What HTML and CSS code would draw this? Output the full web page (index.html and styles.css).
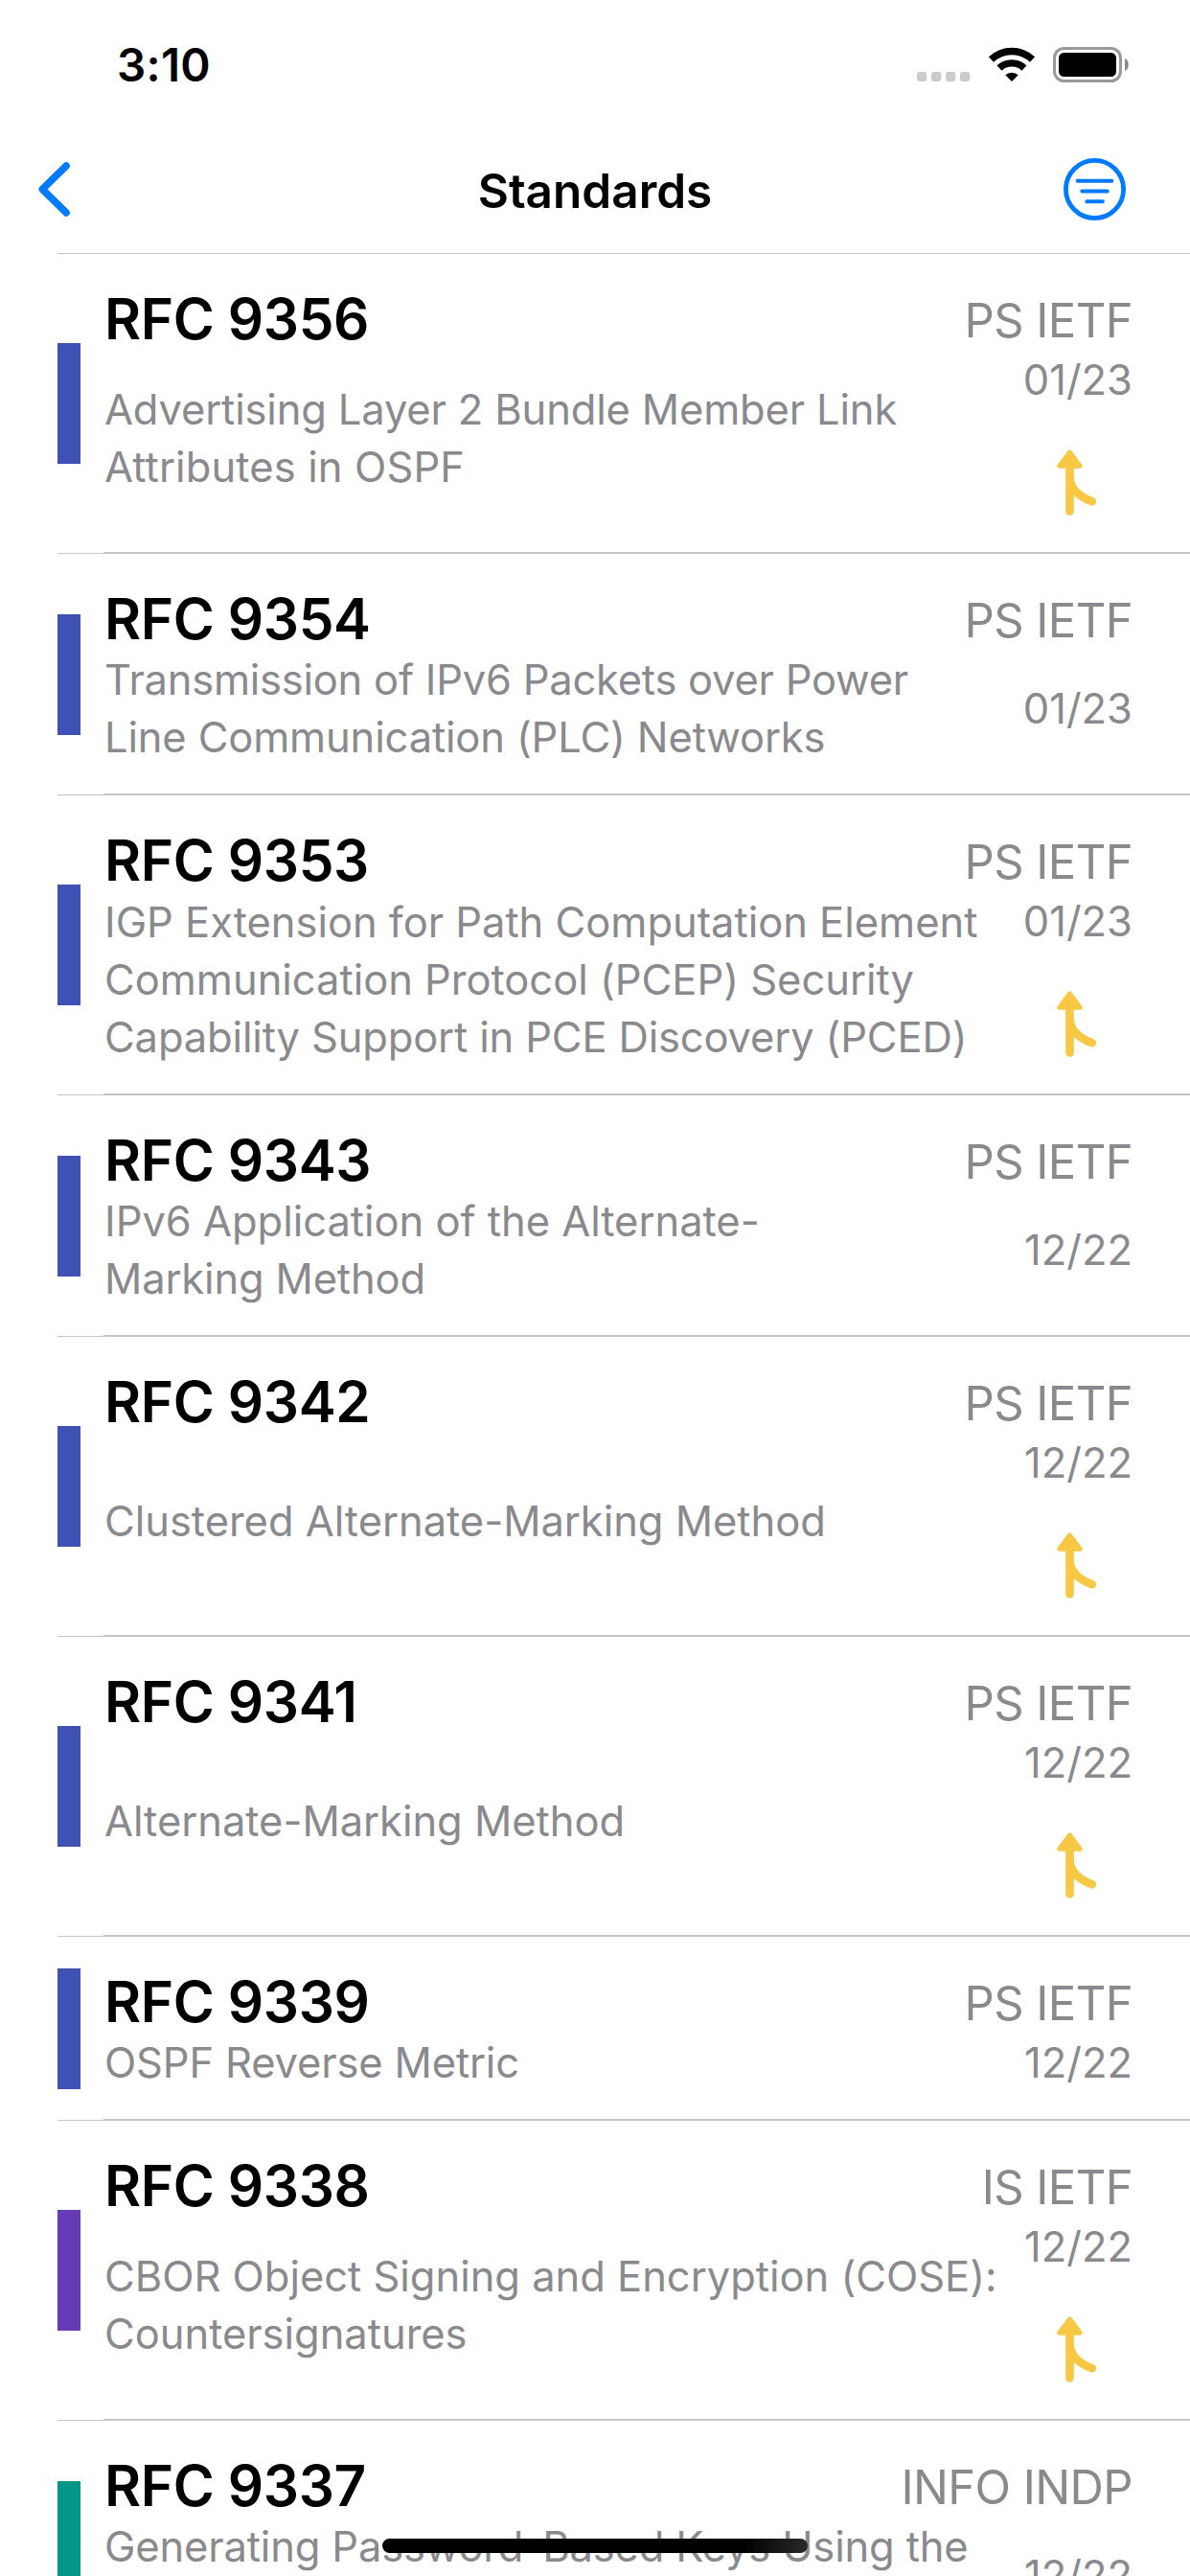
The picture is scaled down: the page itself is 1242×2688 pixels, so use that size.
FILE: index.html
```html
<!DOCTYPE html>
<html lang="en">
<head>
<meta charset="utf-8">
<title>Standards</title>
<link rel="stylesheet" href="styles.css">
</head>
<body>
<svg class="defs" width="0" height="0" aria-hidden="true">
  <symbol id="merge" viewBox="0 0 42 70">
    <path d="M13.500 3L2.800 17.300h21.400z" fill="currentColor" stroke="currentColor" stroke-width="5" stroke-linejoin="round"/>
    <path d="M13.500 17V64.500M13.500 28c0 12 9 21 23.300 26.300" fill="none" stroke="currentColor" stroke-width="8.600" stroke-linecap="round"/>
  </symbol>
</svg>
<div class="screen">
  <header class="status">
    <span class="clock">3:10</span>
    <div class="indicators">
      <svg class="cell" width="56" height="10" viewBox="0 0 56 10"><g fill="#cbcbcb"><rect width="10.300" height="10" rx="3"/><rect x="15" width="10.300" height="10" rx="3"/><rect x="30" width="10.300" height="10" rx="3"/><rect x="45" width="10.300" height="10" rx="3"/></g></svg>
      <svg class="wifi" width="48" height="36" viewBox="0 0 48 36">
        <path d="M24 36l-6.700-6.700a10 10 0 0 1 13.400 0z"/>
        <g fill="none" stroke="#000" stroke-width="7.400"><path d="M11 22a19 19 0 0 1 26 0"/><path d="M2.500 13.100a31 31 0 0 1 43 0"/></g>
      </svg>
      <svg class="battery" width="80" height="37" viewBox="0 0 80 37">
        <rect x="1.500" y="1.500" width="69" height="34" rx="10" fill="none" stroke="#999" stroke-width="3"/>
        <rect x="6" y="6" width="60" height="25" rx="5.500"/>
        <path d="M75 12c5 2 5 11 0 13z" fill="#888"/>
      </svg>
    </div>
  </header>
  <nav class="navbar">
    <svg class="back" width="33" height="57" viewBox="0 0 33 57"><path d="M29.200 4L4.200 28.500l25 24.500" fill="none" stroke="#007aff" stroke-width="7.400" stroke-linecap="round" stroke-linejoin="round"/></svg>
    <h1>Standards</h1>
    <svg class="filter" width="65" height="65" viewBox="0 0 65 65"><g fill="none" stroke="#007aff"><circle cx="32.500" cy="32.500" r="30.100" stroke-width="4.800"/><path d="M14.700 23.800h35.600M19.300 34.500h26.400M24.300 45.200h16.600" stroke-width="4" stroke-linecap="round"/></g></svg>
  </nav>
  <main class="list">
    <article class="row ps">
      <div class="tag"></div>
      <h2>RFC 9356</h2><span class="status-text">PS IETF</span>
      <p class="desc"><span class="snug">Advertising Layer 2 Bundle Member Link</span><br><span class="loose">Attributes in OSPF</span></p>
      <div class="meta"><time>01/23</time><svg class="merge"><use href="#merge"/></svg></div>
    </article>
    <article class="row ps">
      <div class="tag"></div>
      <h2>RFC 9354</h2><span class="status-text">PS IETF</span>
      <p class="desc"><span class="tight">Transmission of IPv6 Packets over Power</span><br><span class="snug">Line Communication (PLC) Networks</span></p>
      <div class="meta"><time>01/23</time></div>
    </article>
    <article class="row ps">
      <div class="tag"></div>
      <h2>RFC 9353</h2><span class="status-text">PS IETF</span>
      <p class="desc">IGP Extension for Path Computation Element<br>Communication Protocol (PCEP) Security<br><span class="snug">Capability Support in PCE Discovery (PCED)</span></p>
      <div class="meta"><time>01/23</time><svg class="merge"><use href="#merge"/></svg></div>
    </article>
    <article class="row ps">
      <div class="tag"></div>
      <h2>RFC 9343</h2><span class="status-text">PS IETF</span>
      <p class="desc">IPv6 Application of the Alternate-<br><span class="snug">Marking Method</span></p>
      <div class="meta"><time>12/22</time></div>
    </article>
    <article class="row ps">
      <div class="tag"></div>
      <h2>RFC 9342</h2><span class="status-text">PS IETF</span>
      <p class="desc">Clustered Alternate-Marking Method</p>
      <div class="meta"><time>12/22</time><svg class="merge"><use href="#merge"/></svg></div>
    </article>
    <article class="row ps">
      <div class="tag"></div>
      <h2>RFC 9341</h2><span class="status-text">PS IETF</span>
      <p class="desc">Alternate-Marking Method</p>
      <div class="meta"><time>12/22</time><svg class="merge"><use href="#merge"/></svg></div>
    </article>
    <article class="row ps">
      <div class="tag"></div>
      <h2>RFC 9339</h2><span class="status-text">PS IETF</span>
      <p class="desc"><span class="snug">OSPF Reverse Metric</span></p>
      <div class="meta"><time>12/22</time></div>
    </article>
    <article class="row is">
      <div class="tag"></div>
      <h2>RFC 9338</h2><span class="status-text">IS IETF</span>
      <p class="desc">CBOR Object Signing and Encryption (COSE):<br>Countersignatures</p>
      <div class="meta"><time>12/22</time><svg class="merge"><use href="#merge"/></svg></div>
    </article>
    <article class="row info">
      <div class="tag"></div>
      <h2>RFC 9337</h2><span class="status-text">INFO INDP</span>
      <p class="desc"><span class="snug">Generating Password-Based Keys Using the</span><br>GOST Algorithms</p>
      <div class="meta"><time>12/22</time></div>
    </article>
  </main>
  <div class="home-indicator"></div>
</div>
</body>
</html>
```
FILE: styles.css
```css
* { box-sizing: border-box; }
body {
  margin: 0;
  background: #fff;
  color: #000;
  font-family: Inter, "Liberation Sans", sans-serif;
}
h1, h2, p { margin: 0; }
.defs { display: block; }
.screen {
  position: relative;
  width: 1242px;
  height: 2688px;
  overflow: hidden;
}
.status {
  display: flex;
  justify-content: space-between;
  align-items: center;
  height: 132px;
  padding: 3px 63px 0 122px;
}
.clock {
  font-size: 47.500px;
  font-weight: 600;
  letter-spacing: 0.300px;
}
.indicators { display: flex; align-items: flex-end; height: 37px; }
.cell { margin: 0 19px 1px 0; }
.wifi { margin: 0 19px 1px 0; }
.navbar {
  display: grid;
  grid-template-columns: 100px 1fr 100px;
  align-items: center;
  height: 132px;
  padding: 0 67px 1px 40px;
}
.navbar h1 {
  font-size: 49.500px;
  font-weight: 600;
  line-height: 60px;
  text-align: center;
  padding: 3px 0 0 27px;
}
.filter { justify-self: end; }
.list { margin-left: 60px; border-top: 1px solid #c6c6c8; }
.row {
  --tag: #3f51b5;
  display: grid;
  grid-template-columns: 49px 1fr 174px;
  grid-template-rows: 68px auto;
  padding: 33px 60px 31px 0;
  background: linear-gradient(#c6c6c8, #c6c6c8) 0 100% / 100% 1px no-repeat,
    linear-gradient(#c6c6c8, #c6c6c8) 100% 100% / calc(100% - 48px) 2px no-repeat;
}
.row.is { --tag: #673ab7; }
.row.info { --tag: #009688; }
.tag {
  grid-column: 1;
  grid-row: 1 / 3;
  align-self: center;
  width: 24px;
  height: 126px;
  margin: -36px 0 -33px;
  background: var(--tag);
}
.row h2 {
  grid-column: 2;
  grid-row: 1;
  font-size: 58.500px;
  font-weight: 600;
  line-height: 70px;
  letter-spacing: -0.400px;
}
.status-text {
  grid-column: 2 / 4;
  grid-row: 1;
  justify-self: end;
  font-size: 49px;
  line-height: 73px;
  color: #8a8a8e;
  letter-spacing: -0.600px;
}
.desc {
  grid-column: 2 / 4;
  grid-row: 2;
  align-self: center;
  font-size: 43.500px;
  line-height: 60px;
  letter-spacing: -0.030px;
  white-space: nowrap;
  color: #8a8a8e;
}
.loose { letter-spacing: 0.120px; }
.snug { letter-spacing: -0.160px; }
.tight { letter-spacing: -0.240px; }
.meta {
  grid-column: 3;
  grid-row: 2;
  display: flex;
  flex-direction: column;
  justify-content: center;
  align-items: flex-end;
  color: #8a8a8e;
}
time { font-size: 43.500px; line-height: 60px; }
.merge { width: 42px; height: 70px; margin: 43px 37px 8px 0; color: #f7c844; }
.home-indicator {
  position: absolute;
  left: 399px;
  bottom: 24px;
  width: 444px;
  height: 15px;
  border-radius: 8px;
  background: linear-gradient(90deg, #000 85%, #2a2a2a);
}
```
